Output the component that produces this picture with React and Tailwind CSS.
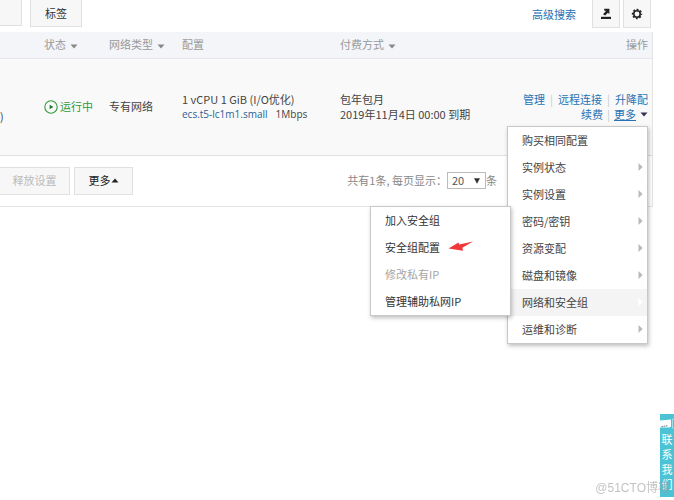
import React, { useState } from 'react';

const MENU = [
  { label: '购买相同配置' },
  { label: '实例状态', sub: true },
  { label: '实例设置', sub: true },
  { label: '密码/密钥', sub: true },
  { label: '资源变配', sub: true },
  { label: '磁盘和镜像', sub: true },
  { label: '网络和安全组', sub: true },
  { label: '运维和诊断', sub: true },
];

const NETWORK_MENU = [
  { label: '加入安全组' },
  { label: '安全组配置', marked: true },
  { label: '修改私有IP', disabled: true },
  { label: '管理辅助私网IP' },
];

const CaretDown = ({ className }) => (
  <svg viewBox="0 0 8 5" className={`inline-block w-2 h-[5px] ${className}`} fill="currentColor">
    <path d="M0.5 0.5h7L4 4.5z" />
  </svg>
);

const CaretRight = ({ className }) => (
  <svg viewBox="0 0 5 8" className={`w-[5px] h-2 ${className}`} fill="currentColor">
    <path d="M0.5 0L4.6 4L0.5 8z" />
  </svg>
);

const ExportIcon = () => (
  <svg viewBox="0 0 12 12" className="w-3 h-3" fill="currentColor">
    <path d="M1 8.8h10v2.2H1z" />
    <path d="M4.2 0.8H9.4v5.4L7.9 4.8L5.2 7.6L3 6.2L6 3L4.2 2.4z" />
  </svg>
);

const GearIcon = () => (
  <svg viewBox="0 0 12 12" className="w-3 h-3" fill="none" stroke="currentColor">
    <circle cx="6" cy="6" r="3.2" strokeWidth="1.6" />
    <circle cx="6" cy="6" r="4.5" strokeWidth="1.4" strokeDasharray="1.9 1.634" strokeDashoffset="0.95" />
  </svg>
);

const RunningIcon = () => (
  <svg viewBox="0 0 14 14" className="w-3.5 h-3.5 shrink-0" fill="none">
    <circle cx="7" cy="7" r="6.2" stroke="#2f9a3a" strokeWidth="1.1" />
    <path d="M5.6 4.8L9.4 7L5.6 9.2z" fill="#1c7a28" />
  </svg>
);

const RedArrow = () => (
  <svg viewBox="0 0 26 12" className="w-[26px] h-3" fill="#f0383a">
    <path d="M0.5 7.4L10.5 1.4L11.2 3.4L25 0.4L14.4 6.8L15 9.8z" />
  </svg>
);

const Divider = () => <span className="text-[#c5c9d0]">|</span>;

const SubMenu = () => (
  <ul className="absolute right-[136px] bottom-0 z-20 w-[141px] bg-white border border-[#c8c8c8] shadow-[1px_2px_4px_rgba(0,0,0,0.25)]">
    {NETWORK_MENU.map((item) => (
      <li key={item.label}>
        <button
          disabled={item.disabled}
          className={`w-full h-[27px] pl-3.5 flex items-center gap-2 text-left ${
            item.disabled ? 'text-[#a5a5a5]' : 'text-[#333]'
          }`}
        >
          {item.label}
          {item.marked && <RedArrow />}
        </button>
      </li>
    ))}
  </ul>
);

const MoreMenu = ({ active, onSelect }) => (
  <ul className="absolute right-1 top-full z-10 mt-1 w-[141px] bg-white border border-[#c8c8c8] text-left shadow-[1px_2px_4px_rgba(0,0,0,0.25)]">
    {MENU.map((item) => (
      <li key={item.label} className="relative">
        <button
          onMouseEnter={() => onSelect(item.label)}
          className={`w-full h-[27px] pl-3.5 pr-1 flex items-center justify-between text-[#444] ${
            active === item.label ? 'bg-[#f4f4f4]' : ''
          }`}
        >
          {item.label}
          {item.sub && (
            <CaretRight className={active === item.label ? 'text-white' : 'text-[#b9b9b9]'} />
          )}
        </button>
        {item.label === '网络和安全组' && active === item.label && <SubMenu />}
      </li>
    ))}
  </ul>
);

const App = () => {
  const [open, setOpen] = useState(true);
  const [active, setActive] = useState('网络和安全组');
  const [pageSize, setPageSize] = useState('20');

  return (
    <div className="relative min-h-screen overflow-hidden bg-white text-[11px] leading-[15px] text-[#444] font-['Noto_Sans_CJK_SC',sans-serif]">
      <div className="mr-[21px]">
        <div className="h-8 flex items-start justify-between">
          <div className="flex gap-2">
            <button aria-label="实例" className="w-[22px] h-[26px] bg-[#f7f7f7] border border-l-0 border-t-0 border-[#e0e0e0]" />
            <button className="w-[52px] h-[27px] bg-[#f7f7f7] border border-t-0 border-[#e0e0e0] text-[#333]">
              标签
            </button>
          </div>
          <div className="flex items-center pr-0.5">
            <a href="#search" className="mr-4 text-[#2672b5]">高级搜索</a>
            <button aria-label="导出" className="w-7 h-7 mr-[3px] flex items-center justify-center bg-[#f7f7f7] border border-t-0 border-[#e0e0e0] text-[#222]">
              <ExportIcon />
            </button>
            <button aria-label="设置" className="w-7 h-7 flex items-center justify-center bg-[#f7f7f7] border border-t-0 border-[#e0e0e0] text-[#222]">
              <GearIcon />
            </button>
          </div>
        </div>

        <div className="border-r border-b border-[#e4e4e4]">
          <table className="w-full table-fixed border-collapse text-left">
            <colgroup>
              <col className="w-11" />
              <col className="w-[65px]" />
              <col className="w-[73px]" />
              <col className="w-[158px]" />
              <col className="w-[120px]" />
              <col />
            </colgroup>
            <thead>
              <tr className="h-[26px] bg-[#f4f5f9] border-b border-[#e4e6ea] text-[#999]">
                <th />
                <th className="font-normal whitespace-nowrap">状态 <CaretDown className="ml-0.5 align-middle text-[#888]" /></th>
                <th className="font-normal whitespace-nowrap">网络类型 <CaretDown className="ml-0.5 align-middle text-[#888]" /></th>
                <th className="font-normal">配置</th>
                <th className="font-normal whitespace-nowrap">付费方式 <CaretDown className="ml-0.5 align-middle text-[#888]" /></th>
                <th className="pr-1 font-normal text-right">操作</th>
              </tr>
            </thead>
            <tbody>
              <tr className="h-[97px] bg-[#f9f9f9] border-b border-[#e0e0e0]">
                <td>
                  <div className="pt-5">)</div>
                </td>
                <td>
                  <div className="flex items-center gap-0.5 whitespace-nowrap text-[#2f9a3a]">
                    <RunningIcon />
                    运行中
                  </div>
                </td>
                <td>专有网络</td>
                <td className="whitespace-nowrap">
                  <div>1 vCPU 1 GiB (I/O优化)</div>
                  <div className="text-[10px] font-['Open_Sans',sans-serif]">
                    <a href="#spec" className="text-[#2a5f96]">ecs.t5-lc1m1.small</a>
                    <span className="ml-2">1Mbps</span>
                  </div>
                </td>
                <td className="whitespace-nowrap">
                  <div>包年包月</div>
                  <div>2019年11月4日 00:00 到期</div>
                </td>
                <td className="p-0">
                  <div className="relative pr-1 text-[#2672b5] whitespace-nowrap">
                    <div className="flex justify-end gap-[5px]">
                      <a href="#manage">管理</a>
                      <Divider />
                      <a href="#connect">远程连接</a>
                      <Divider />
                      <a href="#resize">升降配</a>
                    </div>
                    <div className="flex justify-end gap-1">
                      <a href="#renew">续费</a>
                      <Divider />
                      <button onClick={() => setOpen(!open)} className="flex items-center gap-1">
                        <span className="underline">更多</span>
                        <CaretDown className="text-[#335]" />
                      </button>
                    </div>
                    {open && <MoreMenu active={active} onSelect={setActive} />}
                  </div>
                </td>
              </tr>
            </tbody>
          </table>

          <div className="h-[50px] flex items-center">
            <button disabled className="w-[70px] h-7 bg-[#f7f7f7] border border-l-0 border-[#e0e0e0] text-[#bbb]">
              释放设置
            </button>
            <button className="w-[59px] h-7 ml-1 flex items-center justify-center bg-[#f7f7f7] border border-[#e0e0e0] text-[#222]">
              更多
              <CaretDown className="rotate-180" />
            </button>
            <div className="ml-auto mr-[155px] flex items-center text-[#888]">
              <label htmlFor="page-size">共有1条, 每页显示：</label>
              <span className="relative flex">
                <select
                  id="page-size"
                  value={pageSize}
                  onChange={(e) => setPageSize(e.target.value)}
                  className="w-[39px] h-[17px] pl-1 appearance-none bg-white border border-[#bbb] text-[#555]"
                >
                  <option>20</option>
                  <option>50</option>
                  <option>100</option>
                </select>
                <svg viewBox="0 0 6 6" className="absolute right-1.5 top-1.5 w-1.5 h-1.5 pointer-events-none" fill="#333">
                  <path d="M0 0.3h6L3 5.8z" />
                </svg>
              </span>
              条
            </div>
          </div>
        </div>
      </div>

      <a
        href="#contact"
        className="fixed right-0 bottom-[3px] w-3.5 h-[83px] flex flex-col items-center bg-[#4cc3d4] text-white"
      >
        <svg viewBox="0 0 14 18" className="w-3.5 h-[18px]" fill="none">
          <path d="M0 6.4L11 5.6V12.5L9.5 13.5H0z" fill="#fff" />
          <path d="M1.5 12.6L8 11.7" stroke="#657d83" strokeDasharray="1.5 0.6" />
          <path d="M14 5H12.5V14H14" stroke="#9be0e9" />
        </svg>
        <span className="w-[11px] leading-[15px]">联系我们</span>
      </a>
      <div className="fixed right-1 bottom-1 text-[12px] leading-4 font-['Liberation_Sans','Noto_Sans_CJK_SC',sans-serif] text-[#999]/60">@51CTO博客</div>
    </div>
  );
};

export default App;
